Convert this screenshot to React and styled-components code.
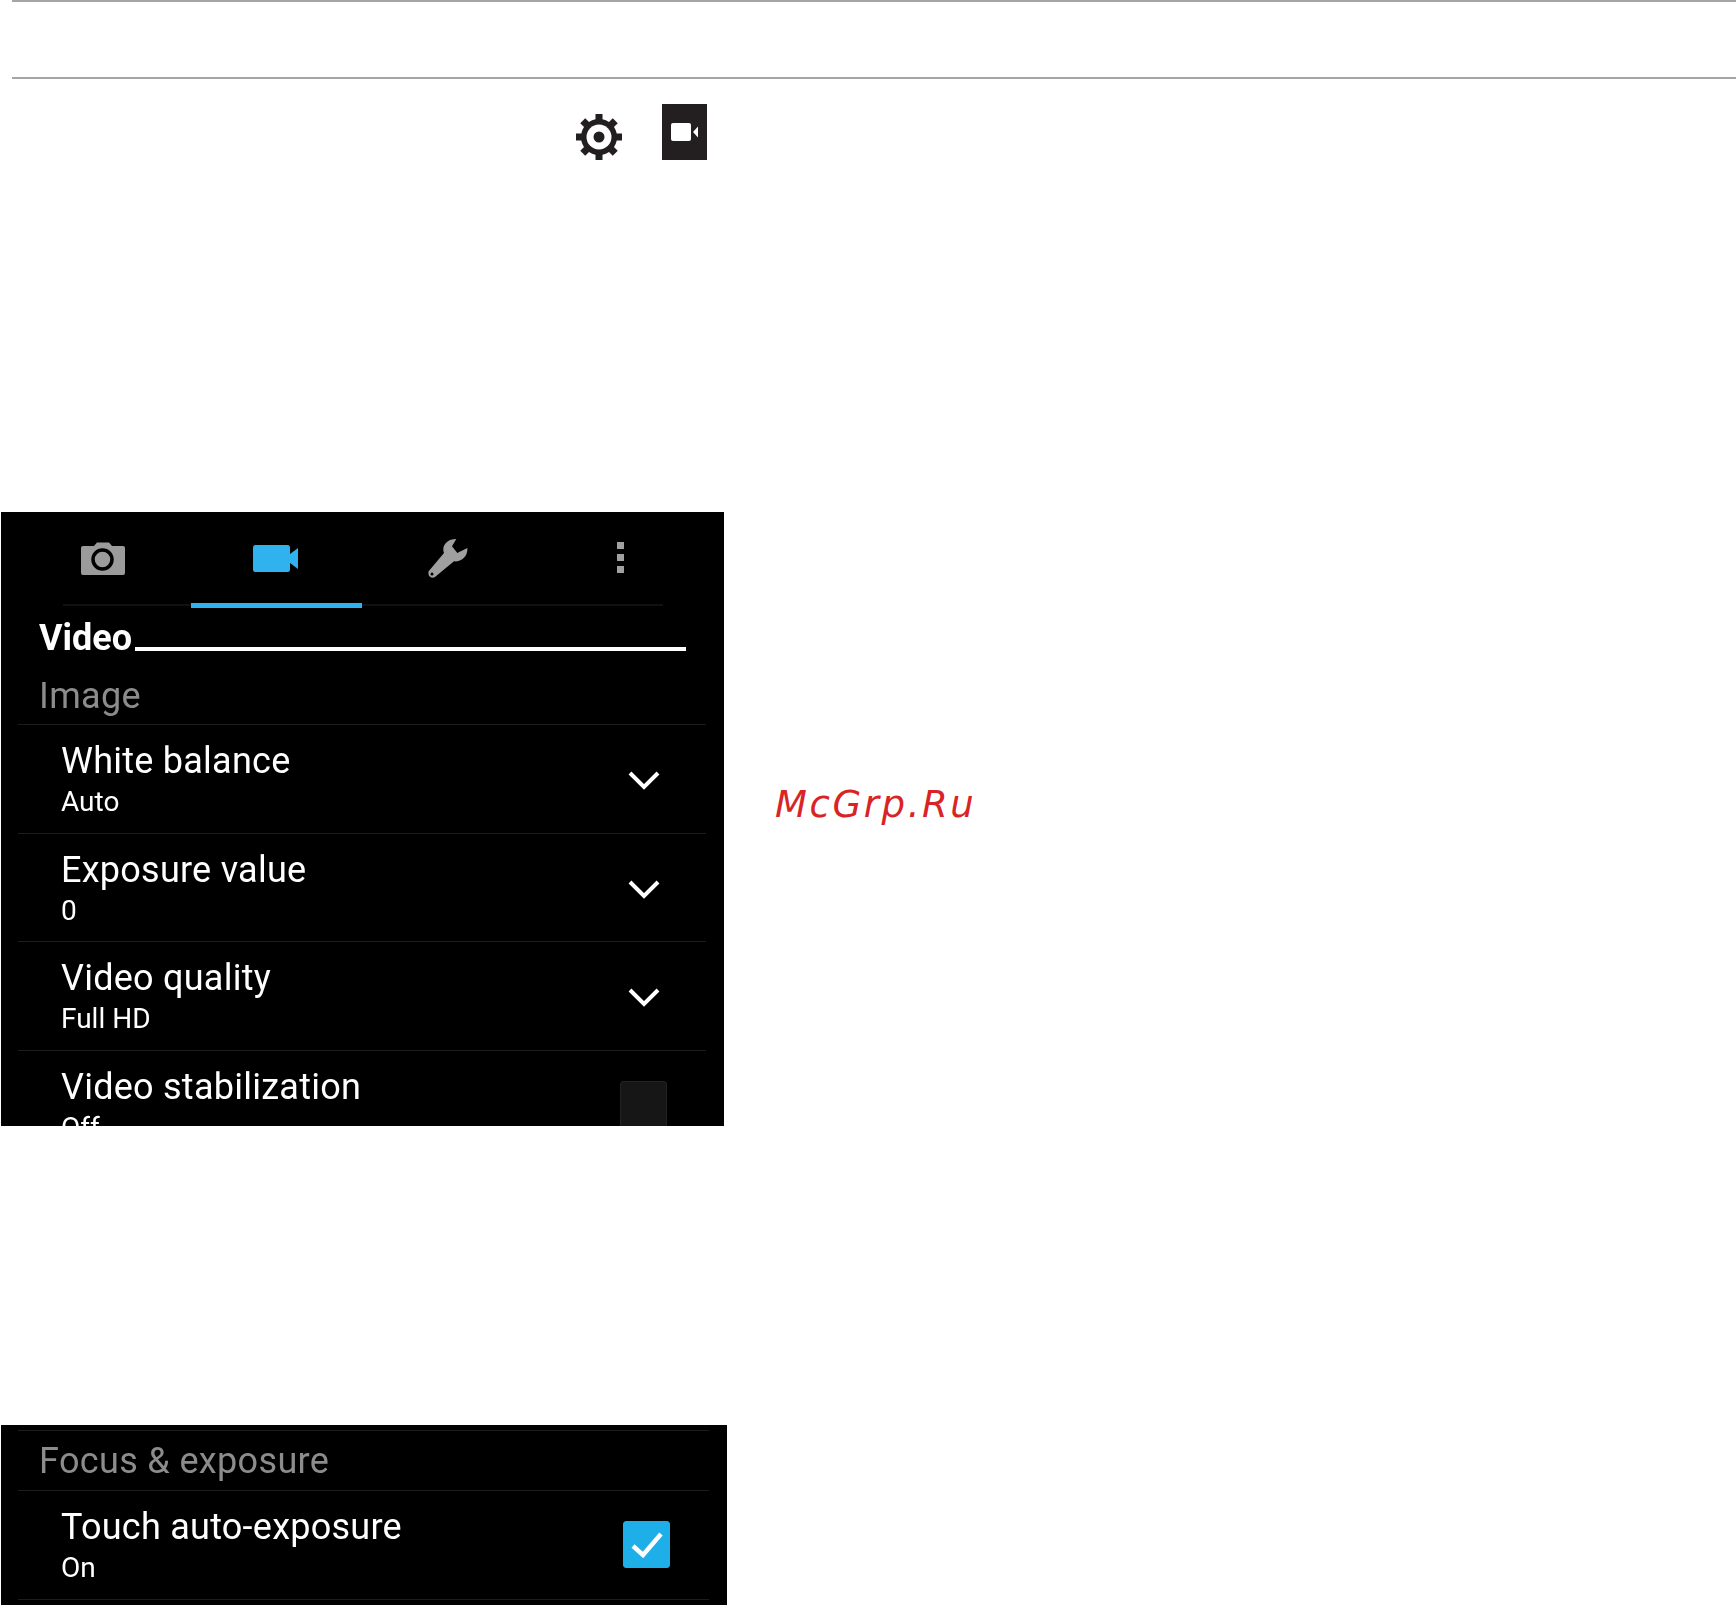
import React from 'react';
import styled, { createGlobalStyle } from 'styled-components';

const GlobalStyle = createGlobalStyle`
    html, body {
        margin: 0;
        padding: 0;
        background: #fff;
    }
    body {
        font-family: Roboto, "Liberation Sans", sans-serif;
    }
`;

const Page = styled.div`
    width: 1736px;
    overflow: hidden;
`;

const Rule = styled.hr`
    border: none;
    height: 2px;
    margin: ${props => props.$top}px 0 0 12px;
    background: #a5a5a5;
`;

const IconRow = styled.div`
    display: flex;
    align-items: flex-end;
    gap: 40px;
    height: 56px;
    margin-top: 25px;
    padding-left: 576px;
`;

const VideoBadge = styled.div`
    width: 45px;
    height: 56px;
    background: #231f20;
    display: flex;
    align-items: flex-start;
    justify-content: center;
    padding-top: 19px;
    box-sizing: border-box;
`;

const ScreenRow = styled.div`
    display: flex;
    align-items: flex-start;
    margin-top: ${props => props.$top}px;
    padding-left: 1px;
`;

const Panel = styled.section`
    width: ${props => props.$width}px;
    height: ${props => props.$height}px;
    background: #000;
    color: #fff;
    overflow: hidden;
    flex-shrink: 0;
    filter: blur(0.5px);
`;

const Watermark = styled.div`
    margin: 271px 0 0 51px;
    font-family: "DejaVu Sans", sans-serif;
    font-style: oblique;
    font-size: 37px;
    line-height: 43px;
    letter-spacing: 2.6px;
    color: #d92427;
`;

const TabBar = styled.div`
    position: relative;
    display: grid;
    grid-template-columns: repeat(4, 172.5px);
    height: 96px;
    padding-left: 16px;
    &::before {
        content: '';
        position: absolute;
        left: 62px;
        width: 600px;
        bottom: 2px;
        height: 2px;
        background: #111;
    }
`;

const Tab = styled.div`
    position: relative;
    display: flex;
    justify-content: center;
    align-items: flex-start;
    padding-top: ${props => props.$pad}px;
    &::after {
        content: '';
        position: absolute;
        left: 1px;
        right: 0;
        bottom: 0;
        height: 5px;
        background: ${props => (props.$active ? '#2fb2ee' : 'transparent')};
    }
`;

const TitleRow = styled.div`
    display: flex;
    align-items: flex-end;
    height: 49px;
    margin: 0 38px 0 38px;
    box-sizing: border-box;
`;

const Title = styled.h2`
    margin: 0;
    font-size: 36px;
    line-height: 38px;
    font-weight: 700;
`;

const TitleLine = styled.div`
    flex: 1;
    height: 4px;
    margin: 0 0 6px 3px;
    background: #fff;
`;

const SectionHead = styled.h3`
    margin: ${props => props.$top || 0}px 18px 0 17px;
    padding: ${props => props.$pad}px 0 ${props => props.$bottom}px 21px;
    border-bottom: 1px solid #1c1c1c;
    border-top: ${props => (props.$ruled ? '1px solid #1c1c1c' : 'none')};
    font-size: 36px;
    line-height: 41px;
    font-weight: 400;
    letter-spacing: 0.35px;
    color: #8c8c8c;
`;

const Row = styled.div`
    display: flex;
    align-items: center;
    justify-content: space-between;
    height: 108.5px;
    box-sizing: border-box;
    margin: 0 18px 0 17px;
    padding: 0 39px 0 43px;
    border-bottom: 1px solid #1c1c1c;
`;

const RowText = styled.div`
    align-self: flex-start;
    padding-top: 16px;
`;

const RowTitle = styled.div`
    font-size: 36px;
    line-height: 41px;
    letter-spacing: 0.25px;
`;

const RowValue = styled.div`
    margin-top: 3px;
    font-size: 28px;
    line-height: 33px;
`;

const Chevron = styled.svg`
    width: 46px;
    height: 22px;
    margin-top: 3px;
    flex-shrink: 0;
`;

const Checkbox = styled.div`
    width: 47px;
    height: 47px;
    border-radius: 3px;
    flex-shrink: 0;
    box-sizing: border-box;
    background: ${props => (props.$checked ? '#1eaee8' : '#161616')};
    border: 1px solid ${props => (props.$checked ? '#1eaee8' : '#222')};
    display: flex;
    align-items: center;
    justify-content: center;
`;

function GearIcon() {
    return (
        <svg width="46" height="46" viewBox="0 0 46 46">
            {[0, 45, 90, 135, 180, 225, 270, 315].map(angle => (
                <rect key={angle} x="19.5" y="0" width="7" height="10" fill="#231f20" transform={`rotate(${angle} 23 23)`} />
            ))}
            <circle cx="23" cy="23" r="18" fill="#231f20" />
            <circle cx="23" cy="23" r="12.5" fill="#fff" />
            <circle cx="23" cy="23" r="5.5" fill="#231f20" />
        </svg>
    );
}

function BadgeCameraIcon() {
    return (
        <svg width="27" height="18" viewBox="0 0 27 18">
            <rect x="0" y="0" width="20" height="18" rx="2" fill="#fff" />
            <path d="M22 9 L27 3.5 V14.5 Z" fill="#fff" />
        </svg>
    );
}

function CameraIcon() {
    return (
        <svg width="44" height="33" viewBox="0 0 44 33">
            <path
                d="M2 4 H13 L16 0.5 H28 L31 4 H42 Q44 4 44 6 V31 Q44 33 42 33 H2 Q0 33 0 31 V6 Q0 4 2 4 Z"
                fill="#9b9b9b"
            />
            <circle cx="21.5" cy="17.5" r="9.5" fill="#9b9b9b" stroke="#000" strokeWidth="3.5" />
        </svg>
    );
}

function VideoIcon() {
    return (
        <svg width="45" height="27" viewBox="0 0 45 27">
            <rect x="0" y="0" width="37" height="27" rx="2.5" fill="#2fb2ee" />
            <path d="M37 9 L45 3 V24 L37 18 Z" fill="#2fb2ee" />
        </svg>
    );
}

function WrenchIcon() {
    return (
        <svg width="40" height="40" viewBox="0 0 120 120">
            <path
                d="M85 3 L72 25 L88 45 L118 30 C120 55 100 72 78 70 L20 118 C10 122 -2 115 2 100 L48 45 C40 25 55 3 85 3 Z"
                fill="#a0a0a0"
            />
            <circle cx="12" cy="108" r="4.5" fill="#000" />
        </svg>
    );
}

function MoreIcon() {
    return (
        <svg width="7" height="31" viewBox="0 0 7 31">
            <rect y="0" width="7" height="7" fill="#a0a0a0" />
            <rect y="12" width="7" height="7" fill="#a0a0a0" />
            <rect y="24" width="7" height="7" fill="#a0a0a0" />
        </svg>
    );
}

function TickIcon() {
    return (
        <svg width="32" height="26" viewBox="0 0 32 26">
            <polyline points="2,14 12,23 30,2" fill="none" stroke="#fff" strokeWidth="4.5" />
        </svg>
    );
}

function SettingRow({ title, value, control }) {
    return (
        <Row>
            <RowText>
                <RowTitle>{title}</RowTitle>
                <RowValue>{value}</RowValue>
            </RowText>
            {control === 'select' && (
                <Chevron viewBox="0 0 46 22">
                    <polyline points="9,4 23,18 37,4" fill="none" stroke="#fff" strokeWidth="4" />
                </Chevron>
            )}
            {control === 'off' && <Checkbox />}
            {control === 'on' && (
                <Checkbox $checked>
                    <TickIcon />
                </Checkbox>
            )}
        </Row>
    );
}

function App() {
    return (
        <Page>
            <GlobalStyle />
            <Rule $top={0} />
            <Rule $top={75} />
            <IconRow>
                <GearIcon />
                <VideoBadge>
                    <BadgeCameraIcon />
                </VideoBadge>
            </IconRow>

            <ScreenRow $top={352}>
                <Panel $width={723} $height={614}>
                    <TabBar>
                        <Tab $pad={30}><CameraIcon /></Tab>
                        <Tab $pad={33} $active><VideoIcon /></Tab>
                        <Tab $pad={26}><WrenchIcon /></Tab>
                        <Tab $pad={30}><MoreIcon /></Tab>
                    </TabBar>
                    <TitleRow>
                        <Title>Video</Title>
                        <TitleLine />
                    </TitleRow>
                    <SectionHead $pad={19} $bottom={7}>Image</SectionHead>
                    <SettingRow title="White balance" value="Auto" control="select" />
                    <SettingRow title="Exposure value" value="0" control="select" />
                    <SettingRow title="Video quality" value="Full HD" control="select" />
                    <SettingRow title="Video stabilization" value="Off" control="off" />
                </Panel>
                <Watermark>McGrp.Ru</Watermark>
            </ScreenRow>

            <ScreenRow $top={299}>
                <Panel $width={726} $height={181}>
                    <SectionHead $top={5} $pad={10} $bottom={8} $ruled>Focus &amp; exposure</SectionHead>
                    <SettingRow title="Touch auto-exposure" value="On" control="on" />
                </Panel>
            </ScreenRow>
        </Page>
    );
}

export default App;
